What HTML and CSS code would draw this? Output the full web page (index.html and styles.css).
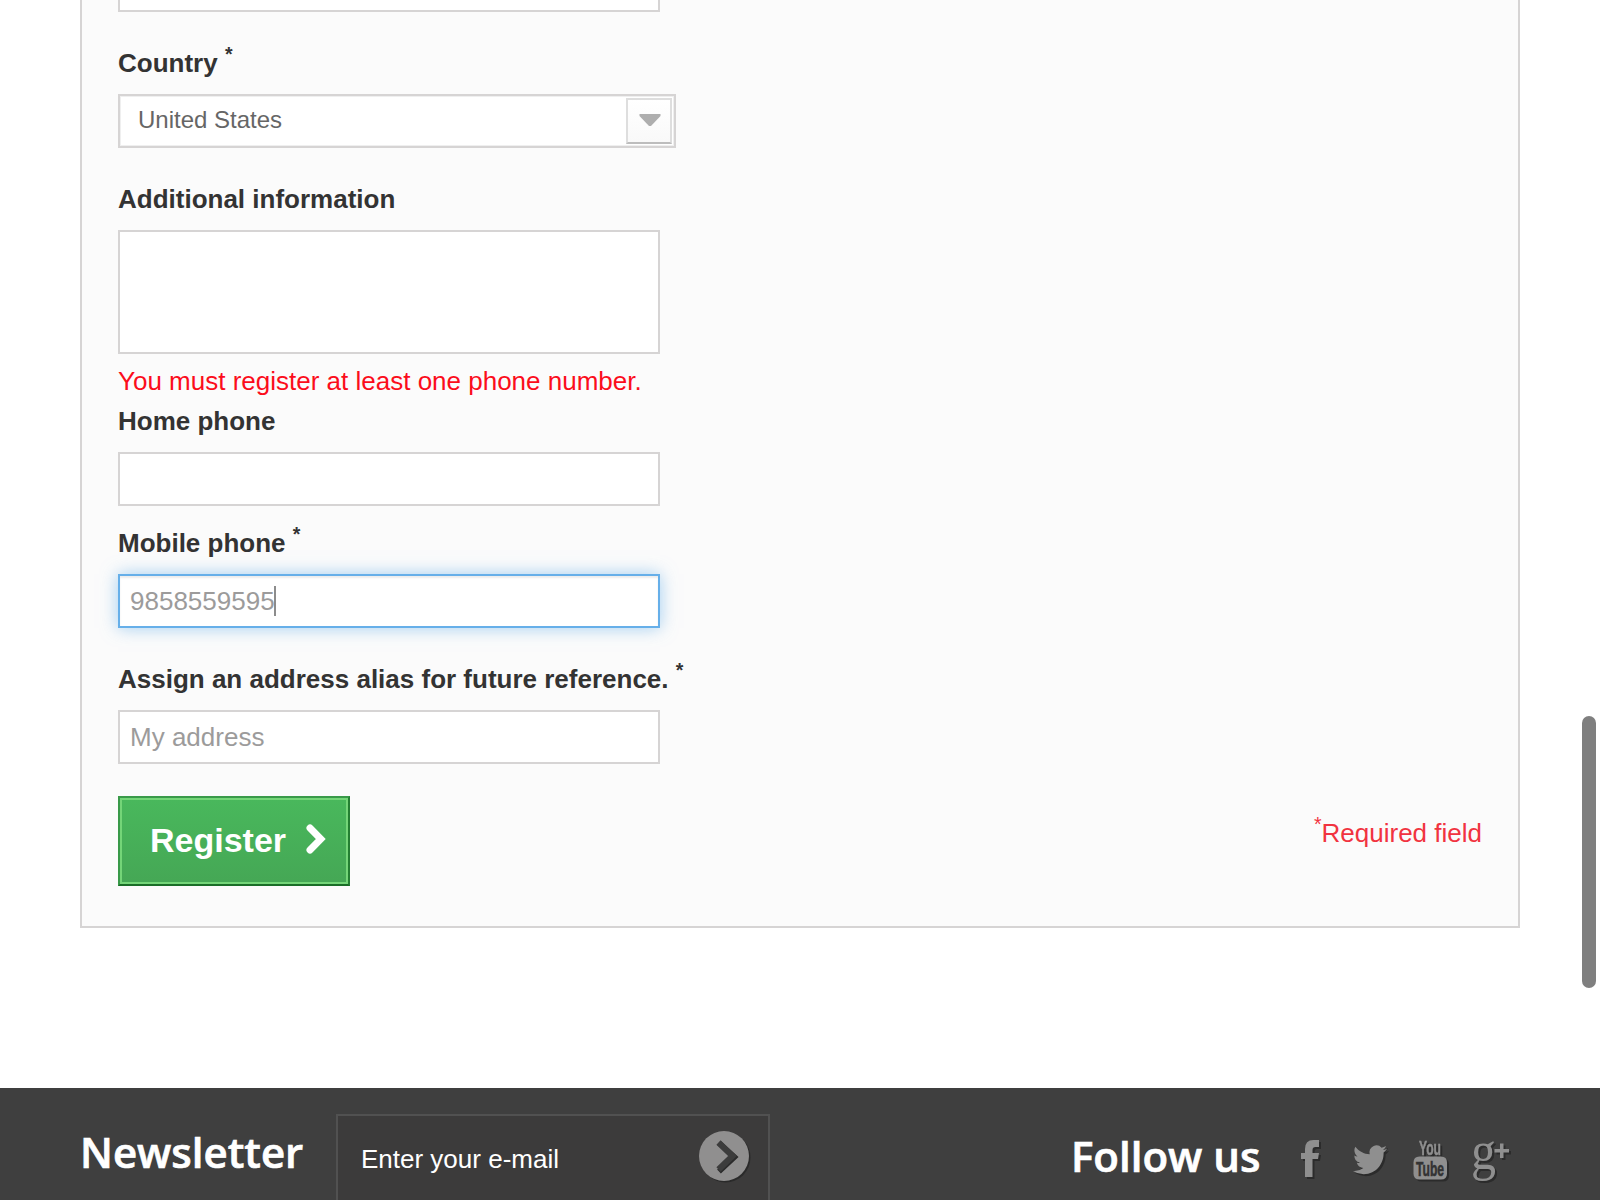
FILE: index.html
```html
<!DOCTYPE html>
<html lang="en">
<head>
<meta charset="utf-8">
<title>Create an account</title>
<link rel="stylesheet" href="styles.css">
</head>
<body>
<div class="page">
  <form class="panel">
    <div class="box box-cut"></div>
    <div class="field country">
      <label class="label">Country <sup>*</sup></label>
      <div class="select"><span class="select-text">United States</span>
        <span class="select-btn"><svg width="22" height="13" viewBox="0 0 22 13"><path d="M0.500 0H21.500V2L12 12H10L0.500 2Z" fill="#aeaeae"/></svg></span>
      </div>
    </div>
    <div class="field info">
      <label class="label">Additional information</label>
      <div class="box box-area"></div>
    </div>
    <p class="error">You must register at least one phone number.</p>
    <div class="field home">
      <label class="label">Home phone</label>
      <div class="box"></div>
    </div>
    <div class="field mobile">
      <label class="label">Mobile phone <sup>*</sup></label>
      <div class="box box-focus"><span>9858559595</span><i class="caret"></i></div>
    </div>
    <div class="field alias">
      <label class="label">Assign an address alias for future reference. <sup>*</sup></label>
      <div class="box"><span>My address</span></div>
    </div>
    <div class="submit">
      <button type="button" class="register"><span class="register-text">Register</span>
        <svg class="chevron" width="20" height="30" viewBox="0 0 20 30"><path d="M4 4L14.8 15L4 26" fill="none" stroke="#fff" stroke-width="7" stroke-linecap="round" stroke-linejoin="miter"/></svg>
      </button>
      <p class="required"><sup>*</sup><span>Required field</span></p>
    </div>
  </form>
  <footer class="footer">
    <h4 class="newsletter">Newsletter</h4>
    <div class="email"><span class="email-text">Enter your e-mail</span>
      <svg class="go" width="54" height="54" viewBox="0 0 54 54"><circle cx="26.500" cy="26.500" r="25" fill="#2a2a2a"/><circle cx="25" cy="25" r="25" fill="#908f8f"/><path d="M20 12L35.500 26L20 40.500" fill="none" stroke="#2b2b2b" stroke-width="5.500"/><path d="M19.500 11.500L33.500 25L19.500 38.500" fill="none" stroke="#3c3c3c" stroke-width="6"/></svg>
    </div>
    <h4 class="follow">Follow us</h4>
    <svg class="social" width="218" height="56" viewBox="0 0 218 56">
      <g class="glyphs">
        <path d="M18 0V7H14.500Q11.500 7 11.500 10V13H18L17 19H11.500V37H4V19H0V13H4V9Q4 0 12.500 0Z"/>
        <path transform="translate(52 2) scale(1.420 1.480)" d="M23.953 4.570a10 10 0 01-2.825.775 4.958 4.958 0 002.163-2.723c-.951.555-2.005.959-3.127 1.184a4.920 4.920 0 00-8.384 4.482C7.690 8.095 4.067 6.130 1.640 3.162a4.822 4.822 0 00-.666 2.475c0 1.710.870 3.213 2.188 4.096a4.904 4.904 0 01-2.228-.616v.060a4.923 4.923 0 003.946 4.827 4.996 4.996 0 01-2.212.085 4.936 4.936 0 004.604 3.417 9.867 9.867 0 01-6.102 2.105c-.390 0-.779-.023-1.170-.067a13.995 13.995 0 007.557 2.209c9.053 0 13.998-7.496 13.998-13.985 0-.210 0-.420-.015-.630A9.935 9.935 0 0024 4.590z"/>
        <path d="M118.500 16.500H140Q146 16.500 146 22.500V33.500Q146 39.500 140 39.500H118.500Q112.500 39.500 112.500 33.500V22.500Q112.500 16.500 118.500 16.500Z"/>
        <text class="you" x="118" y="15" textLength="22" lengthAdjust="spacingAndGlyphs">You</text>
        <text class="gee" x="170" y="28.500" textLength="25" lengthAdjust="spacingAndGlyphs">g</text>
        <path d="M199 3.500H202.500V9H208V12.500H202.500V18H199V12.500H193.500V9H199Z"/>
      </g>
      <text class="tube" x="115" y="35.500" textLength="28" lengthAdjust="spacingAndGlyphs">Tube</text>
    </svg>
  </footer>
  <div class="scrollbar"></div>
</div>
</body>
</html>
```
FILE: styles.css
```css
* { box-sizing: border-box; }
body { margin: 0; background: #fff; font-family: "Liberation Sans", Arial, sans-serif; font-size: 26px; color: #333; }
p, h4 { margin: 0; }
.page { position: relative; width: 1600px; height: 1200px; overflow: hidden; }
.panel { width: 1440px; height: 928px; margin: 0 80px; padding: 0 36px; border: 2px solid #d6d4d4; border-top: 0; background: #fbfbfb; }
.box { width: 542px; height: 54px; padding: 0 10px; border: 2px solid #d6d4d4; background: #fff; color: #9c9b9b; line-height: 49px; display: flex; align-items: center; }
.box-cut { height: 12px; border-top: 0; }
.box-area { height: 124px; }
.box-focus { border-color: #66afe9; box-shadow: inset 0 2px 2px rgba(0,0,0,.075), 0 0 16px rgba(102,175,233,.6); }
.caret { width: 2px; height: 30px; margin-left: -1px; background: #8c8c8c; }
.field { display: flex; flex-direction: column; }
.label { font-weight: 700; line-height: 30px; height: 46px; white-space: pre; }
sup { font-size: 19.500px; line-height: 0; position: relative; top: -.55em; vertical-align: baseline; }
.country { padding-top: 36px; }
.info { padding-top: 36px; }
.error { color: #fb0d1b; line-height: 36px; padding-top: 9px; }
.home { padding-top: 7px; }
.mobile { padding-top: 22px; }
.alias { padding-top: 36px; }
.select { width: 558px; height: 54px; border: 2px solid #d6d4d4; background: #fff; box-shadow: inset 0 0 0 1px #efefef; display: flex; justify-content: space-between; padding: 2px 2px 0 18px; }
.select-text { font-size: 24px; line-height: 44px; color: #666; }
.select-btn { width: 46px; height: 46px; border: 2px solid #dedede; border-bottom-color: #bdbdbd; background: linear-gradient(#fff, #f9f9f9); display: flex; justify-content: center; padding: 14px 0 0 2px; }
.submit { padding-top: 32px; display: flex; justify-content: space-between; align-items: flex-start; }
.register { width: 232px; height: 90px; padding: 0 0 3px 30px; border: 2px solid; border-color: #399a49 #247f32 #1a6d27 #399a49; background: linear-gradient(#49b85c, #45a755); box-shadow: inset 0 0 0 2px #74d578; color: #fff; font: 700 34px "Liberation Sans", Arial, sans-serif; display: flex; align-items: center; }
.register-text { padding-top: 2px; }
.chevron { margin: 0 0 2px 20px; }
.required { color: #f13340; line-height: 36px; padding-top: 19px; }
.footer { margin-top: 160px; height: 112px; background: #3f3f3f; color: #fff; padding: 0 80px; display: flex; align-items: flex-start; }
.newsletter, .follow { font: 600 42px/60px "Open Sans", sans-serif; white-space: nowrap; -webkit-text-stroke: .7px #fff; }
.newsletter { width: 256px; padding-top: 34px; }
.email { width: 434px; height: 120px; margin-top: 26px; border: 2px solid #515151; background: #3c3b3b; display: flex; justify-content: space-between; padding: 15px 15px 0 23px; }
.email-text { line-height: 56px; }
.follow { margin-left: 301px; width: 230px; padding-top: 38px; }
.social { margin-top: 52px; overflow: visible; }
.glyphs { fill: #8f8f8f; filter: drop-shadow(2px 2px 0 #2b2b2b); }
.you, .tube { font: 700 21px "Liberation Sans Narrow", "Liberation Sans", sans-serif; }
.you { stroke: #8f8f8f; stroke-width: .5px; }
.tube { fill: #333; stroke: #333; stroke-width: .6px; }
.gee { font: 55px "Liberation Serif", serif; }
.scrollbar { position: absolute; right: 4px; top: 716px; width: 14px; height: 272px; border-radius: 7px; background: #7f7f7f; }
```
